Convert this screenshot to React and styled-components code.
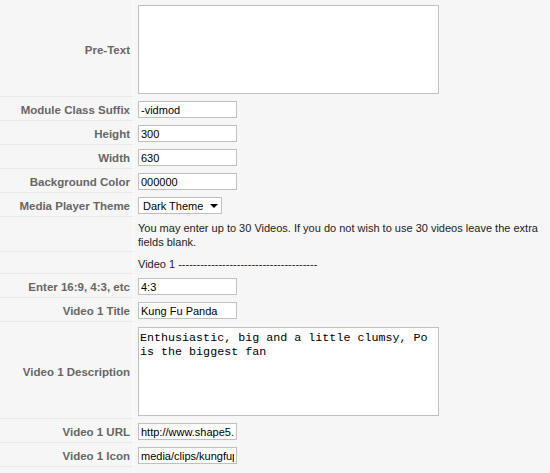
import React from 'react';
import styled, { createGlobalStyle } from 'styled-components';

const GlobalStyle = createGlobalStyle`
  html, body {
    margin: 0;
    padding: 0;
    background: #f6f6f6;
    font-family: "Liberation Sans", Arial, sans-serif;
  }
`;

// Param table: label column on the left, field column on the right
const ParamTable = styled.div`
  display: grid;
  grid-template-columns: 134px 1fr;
  width: 550px;
  background: #f6f6f6;
`;

const Key = styled.div`
  box-sizing: border-box;
  display: flex;
  align-items: center;
  justify-content: flex-end;
  padding: 3px 3px 0 4px;
  background: #f6f6f6;
  border-bottom: 1px solid #e9e9e9;
  border-right: 1px solid #fcfcfc;
  color: #666;
  font-size: 11.5px;
  font-weight: bold;
  text-align: right;
  min-height: ${p => p.$minHeight || 0}px;
`;

const paddings = {
  textarea: '5px 4px 3px',
  note: '4px 4px 3px',
  divider: '5px 4px 3px',
  field: '4px 4px 2px',
};

const Value = styled.div`
  box-sizing: border-box;
  padding: ${p => paddings[p.$kind] || paddings.field};
  color: #222;
  font-size: 11px;
  line-height: 14px;
`;

const TextInput = styled.input`
  box-sizing: border-box;
  display: block;
  width: 99px;
  height: 17px;
  margin: 0;
  padding: 0 2px;
  border: 1px solid #c0c0c0;
  background: #fff;
  color: #000;
  font-family: "Liberation Sans", Arial, sans-serif;
  font-size: 11px;
  outline: none;
`;

const TextArea = styled.textarea`
  box-sizing: border-box;
  display: block;
  width: 301px;
  height: 89px;
  margin: 0;
  padding: 3px 1px 2px;
  border: 1px solid #c0c0c0;
  background: #fff;
  color: #000;
  font-family: "Liberation Mono", "Courier New", monospace;
  font-size: 11.7px;
  line-height: 14px;
  resize: none;
  overflow: hidden;
  outline: none;
`;

const SelectWrap = styled.div`
  position: relative;
  width: 84px;
  height: 17px;
`;

const Select = styled.select`
  box-sizing: border-box;
  display: block;
  width: 100%;
  height: 100%;
  margin: 0;
  padding: 0 0 0 4px;
  border: 1px solid #c0c0c0;
  border-radius: 0;
  background: #fff;
  color: #000;
  font-family: "Liberation Sans", Arial, sans-serif;
  font-size: 11px;
  appearance: none;
  outline: none;
`;

const Arrow = styled.span`
  position: absolute;
  right: 4px;
  top: 7px;
  width: 0;
  height: 0;
  border-left: 4px solid transparent;
  border-right: 4px solid transparent;
  border-top: 4px solid #000;
  pointer-events: none;
`;

const rows = [
  { label: 'Pre-Text', type: 'textarea', value: '' },
  { label: 'Module Class Suffix', type: 'field', value: '-vidmod' },
  { label: 'Height', type: 'field', value: '300' },
  { label: 'Width', type: 'field', value: '630' },
  { label: 'Background Color', type: 'field', value: '000000' },
  { label: 'Media Player Theme', type: 'select', value: 'Dark Theme' },
  {
    label: '',
    type: 'note',
    value:
      'You may enter up to 30 Videos. If you do not wish to use 30 videos leave the extra fields blank.',
  },
  { label: '', type: 'divider', value: 'Video 1 ' + '-'.repeat(38) },
  { label: 'Enter 16:9, 4:3, etc', type: 'field', value: '4:3' },
  { label: 'Video 1 Title', type: 'field', value: 'Kung Fu Panda' },
  {
    label: 'Video 1 Description',
    type: 'textarea',
    value: 'Enthusiastic, big and a little clumsy, Po is the biggest fan',
  },
  { label: 'Video 1 URL', type: 'field', value: 'http://www.shape5.com/demo/media/clips/kungfupanda.flv' },
  { label: 'Video 1 Icon', type: 'field', value: 'media/clips/kungfupanda.jpg' },
  { label: '', type: 'blank', value: '' },
];

const Field = ({ row }) => {
  switch (row.type) {
    case 'textarea':
      return <TextArea defaultValue={row.value} />;
    case 'select':
      return (
        <SelectWrap>
          <Select defaultValue={row.value}>
            <option>Dark Theme</option>
            <option>Light Theme</option>
          </Select>
          <Arrow />
        </SelectWrap>
      );
    case 'note':
    case 'divider':
      return <div>{row.value}</div>;
    case 'blank':
      return null;
    default:
      return <TextInput type="text" defaultValue={row.value} />;
  }
};

const App = () => (
  <>
    <GlobalStyle />
    <ParamTable>
      {rows.map((row, i) => (
        <React.Fragment key={i}>
          <Key $minHeight={row.type === 'note' || row.type === 'divider' ? 0 : 24}>{row.label}</Key>
          <Value $kind={row.type}>
            <Field row={row} />
          </Value>
        </React.Fragment>
      ))}
    </ParamTable>
  </>
);

export default App;
